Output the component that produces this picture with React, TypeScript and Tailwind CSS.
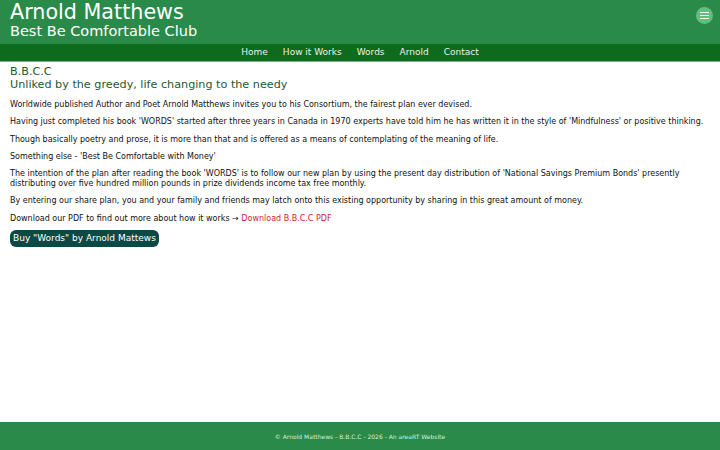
export default function App() {
  return (
    <div className="min-h-screen flex flex-col bg-white font-['DejaVu_Sans',sans-serif]">
      {/* Header */}
      <header className="bg-[#2a8a4a] h-[44px] flex items-start justify-between px-[10px]">
        <div className="pt-[1px] text-white">
          <h1 className="text-[20.7px] leading-[22px]">Arnold Matthews</h1>
          <p className="text-[14.5px] leading-[16px]">Best Be Comfortable Club</p>
        </div>
        <button className="mt-[7px] -mr-[3px] w-[17px] h-[17px] rounded-full bg-[#5fbf7e] flex flex-col items-center justify-center gap-[1.5px]">
          <span className="block w-[9px] h-[1.5px] bg-white" />
          <span className="block w-[9px] h-[1.5px] bg-white" />
          <span className="block w-[9px] h-[1.5px] bg-white" />
        </button>
      </header>

      {/* Nav */}
      <nav className="bg-[#0e6a1c] h-[18px] border-b border-[#7fb08a] flex items-center justify-center gap-[15px] text-[#e8f3ea] text-[9px]">
        <a>Home</a>
        <a>How it Works</a>
        <a>Words</a>
        <a>Arnold</a>
        <a>Contact</a>
      </nav>

      {/* Content */}
      <main className="flex-1 px-[10px] pt-[3px] text-[#111] text-[8px] leading-[10px]">
        <h2 className="text-[#1e5a2e] text-[11.2px] leading-[13px]">B.B.C.C</h2>
        <h3 className="text-[#1e5a2e] text-[11.2px] leading-[14px] mb-[8px]">Unliked by the greedy, life changing to the needy</h3>
        <div className="flex flex-col gap-[7.3px]">
          <p>Worldwide published Author and Poet Arnold Matthews invites you to his Consortium, the fairest plan ever devised.</p>
          <p>Having just completed his book 'WORDS' started after three years in Canada in 1970 experts have told him he has written it in the style of 'Mindfulness' or positive thinking.</p>
          <p>Though basically poetry and prose, it is more than that and is offered as a means of contemplating of the meaning of life.</p>
          <p>Something else - 'Best Be Comfortable with Money'</p>
          <p>The intention of the plan after reading the book 'WORDS' is to follow our new plan by using the present day distribution of 'National Savings Premium Bonds' presently distributing over five hundred million pounds in prize dividends income tax free monthly.</p>
          <p>By entering our share plan, you and your family and friends may latch onto this existing opportunity by sharing in this great amount of money.</p>
          <p>Download our PDF to find out more about how it works → <a className="text-[#d01f2a]">Download B.B.C.C PDF</a></p>
        </div>
        <button className="mt-[6px] bg-[#0b4a44] text-white text-[9px] leading-[11px] px-[3px] py-[3px] rounded-[6px]">Buy "Words" by Arnold Mattews</button>
      </main>

      {/* Footer */}
      <footer className="bg-[#2a8a4a] h-[28px] flex items-center justify-center text-[#d8eedd] text-[6px]">
        © Arnold Matthews - B.B.C.C - 2026 - An areaRT Website
      </footer>
    </div>
  );
}
